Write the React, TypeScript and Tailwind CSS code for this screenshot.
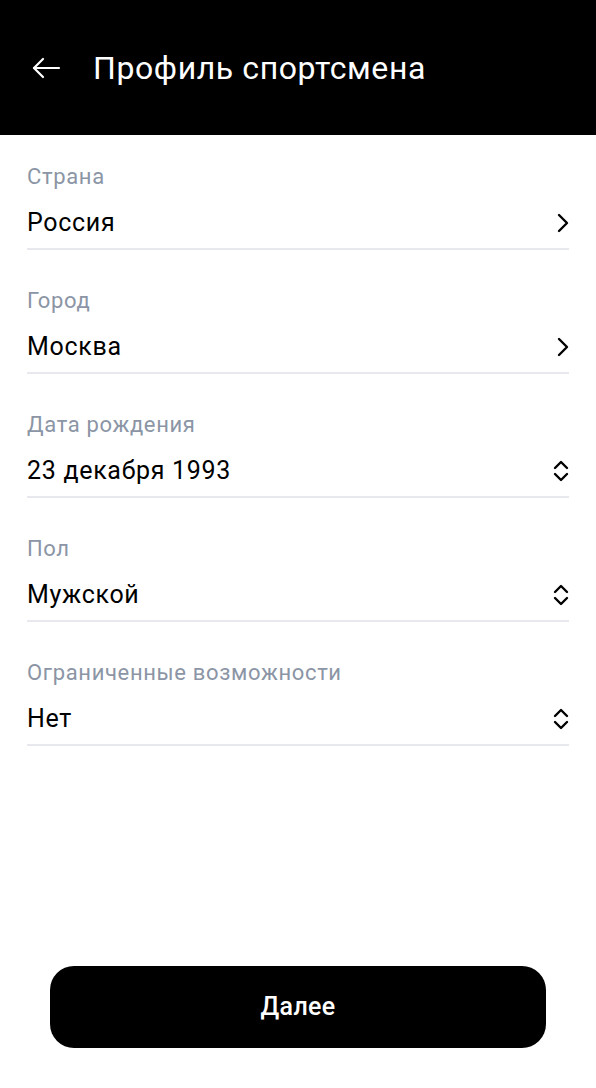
type Field = { label: string; value: string; kind: "link" | "select" };

const FIELDS: Field[] = [
  { label: "Страна", value: "Россия", kind: "link" },
  { label: "Город", value: "Москва", kind: "link" },
  { label: "Дата рождения", value: "23 декабря 1993", kind: "select" },
  { label: "Пол", value: "Мужской", kind: "select" },
  { label: "Ограниченные возможности", value: "Нет", kind: "select" },
];

function BackArrow() {
  return (
    <svg width="30" height="24" viewBox="0 0 30 24" fill="none" stroke="#fff" strokeWidth="2.2" strokeLinecap="round" strokeLinejoin="round">
      <path d="M28 12H3" />
      <path d="M12 3L3 12l9 9" />
    </svg>
  );
}

function Chevron() {
  return (
    <svg width="14" height="22" viewBox="0 0 14 22" fill="none" stroke="#000" strokeWidth="2.4" strokeLinecap="round" strokeLinejoin="round">
      <path d="M4 3l8 8-8 8" />
    </svg>
  );
}

function UpDown() {
  return (
    <svg width="16" height="24" viewBox="0 0 16 24" fill="none" stroke="#000" strokeWidth="2.4" strokeLinecap="round" strokeLinejoin="round">
      <path d="M2 9l6-6 6 6" />
      <path d="M2 15l6 6 6-6" />
    </svg>
  );
}

export default function App() {
  return (
    <div className="flex flex-col h-[1088px] w-[596px] bg-white font-['Roboto',sans-serif]">
      {/* Header */}
      <div className="flex items-center h-[135px] bg-black pl-[31px] gap-[32px] shrink-0">
        <BackArrow />
        <h1 className="text-[32px] leading-none text-white font-normal tracking-[0.6px]">Профиль спортсмена</h1>
      </div>

      {/* Fields */}
      <div className="flex flex-col gap-[39px] px-[27px] pt-[30px]">
        {FIELDS.map(f => (
          <div key={f.label} className="flex flex-col">
            <p className="text-[22px] leading-[24px] text-[#8b95a5] tracking-[0.65px]">{f.label}</p>
            <div className="flex items-center justify-between mt-[20px] h-[28px]">
              <span className="text-[25px] leading-[28px] text-black tracking-[0.7px]">{f.value}</span>
              {f.kind === "link" ? <Chevron /> : <UpDown />}
            </div>
            <div className="mt-[11px] h-[2px] bg-[#e7e9ee]" />
          </div>
        ))}
      </div>

      <div className="flex-1" />

      {/* Button */}
      <div className="px-[50px] pb-[40px]">
        <button className="w-full h-[82px] rounded-[24px] bg-black text-white text-[25px] font-medium tracking-[0.3px]">Далее</button>
      </div>
    </div>
  );
}
